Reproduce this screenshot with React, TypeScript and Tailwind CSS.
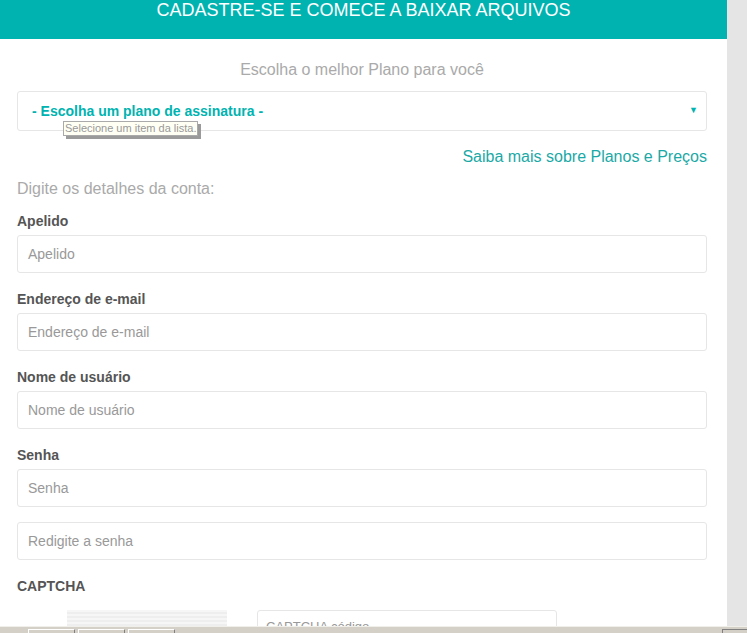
import React from 'react';

const font = { fontFamily: '"Liberation Sans", Arial, sans-serif' };

type Field = { label?: string; placeholder: string };

const fields: Field[] = [
  { label: 'Apelido', placeholder: 'Apelido' },
  { label: 'Endereço de e-mail', placeholder: 'Endereço de e-mail' },
  { label: 'Nome de usuário', placeholder: 'Nome de usuário' },
  { label: 'Senha', placeholder: 'Senha' },
  { placeholder: 'Redigite a senha' },
];

const FormField: React.FC<Field> = ({ label, placeholder }) => (
  <div className={label ? 'mb-[16px]' : 'mb-[16px] -mt-[1px]'}>
    {label && (
      <div className="mb-[4px] text-[14px] leading-[20px] font-bold text-[#555]">{label}</div>
    )}
    <div className="h-[38px] rounded-[3px] border border-[#e6e6e6] bg-white px-[10px] flex items-center text-[14px] text-[#999]">
      {placeholder}
    </div>
  </div>
);

const App: React.FC = () => {
  return (
    <div className="h-[633px] w-[747px] overflow-hidden flex flex-col bg-white" style={font}>
      <div className="flex flex-1 min-h-0">
        {/* Main panel */}
        <div className="w-[727px] shrink-0 overflow-hidden">
          {/* Header */}
          <div className="h-[39px] bg-[#00b3b0] text-center text-white text-[18px] leading-[20px]">
            CADASTRE-SE E COMECE A BAIXAR ARQUIVOS
          </div>

          <div className="px-[17px] pr-[20px]">
            <div className="mt-[21px] text-center text-[16px] leading-[20px] text-[#aaa]">
              Escolha o melhor Plano para você
            </div>

            {/* Plan select */}
            <div className="relative mt-[11px] h-[40px] rounded-[3px] border border-[#e6e6e6] flex items-center justify-between pl-[14px] pr-[8px]">
              <span className="text-[14px] font-bold text-[#00b3b0]">- Escolha um plano de assinatura -</span>
              <span className="text-[9px] text-[#00b3b0]">▼</span>
              {/* Tooltip */}
              <div className="absolute left-[45px] top-[29px] border border-[#aaa] bg-[#fffff4] px-[1px] text-[11px] leading-[13px] text-[#999] shadow-[3px_3px_0_#9a9a9a]">
                Selecione um item da lista.
              </div>
            </div>

            <div className="mt-[15px] text-right text-[16px] leading-[22px] text-[#1aa9a6]">
              Saiba mais sobre Planos e Preços
            </div>

            <div className="mt-[11px] text-[16px] leading-[20px] text-[#aaa]">Digite os detalhes da conta:</div>

            <div className="mt-[12px]">
              {fields.map((f) => (
                <FormField key={f.placeholder} {...f} />
              ))}
            </div>

            <div className="mt-[15px] text-[14px] leading-[20px] font-bold text-[#555]">CAPTCHA</div>

            {/* Captcha */}
            <div className="mt-[14px] flex items-start">
              <div className="ml-[50px] h-[40px] w-[160px] bg-[repeating-linear-gradient(0deg,#eeeeee_0px,#eeeeee_2px,#f6f6f6_2px,#f6f6f6_4px)]" />
              <div className="ml-[30px] h-[38px] w-[300px] rounded-[3px] border border-[#e6e6e6] px-[8px] pt-[8px] text-[13px] leading-[16px] text-[#999]">
                CAPTCHA código
              </div>
            </div>
          </div>
        </div>
        {/* Right gutter */}
        <div className="flex-1 bg-[#e5e5e5]" />
      </div>

      {/* Bottom window bar */}
      <div className="h-[7px] shrink-0 border-t border-[#f0efea] bg-[#d4d0c8] flex items-start pl-[28px] gap-[3px]">
        <div className="mt-[2px] h-[4px] w-[47px] border-t border-l border-white border-r border-r-[#808080]" />
        <div className="mt-[2px] h-[4px] w-[47px] border-t border-l border-white border-r border-r-[#808080]" />
        <div className="mt-[2px] h-[4px] w-[47px] border-t border-l border-white border-r border-r-[#808080]" />
        <div className="flex-1" />
        <div className="mt-[2px] h-[4px] w-[25px] border-t border-l border-[#808080]" />
      </div>
    </div>
  );
};

export default App;
